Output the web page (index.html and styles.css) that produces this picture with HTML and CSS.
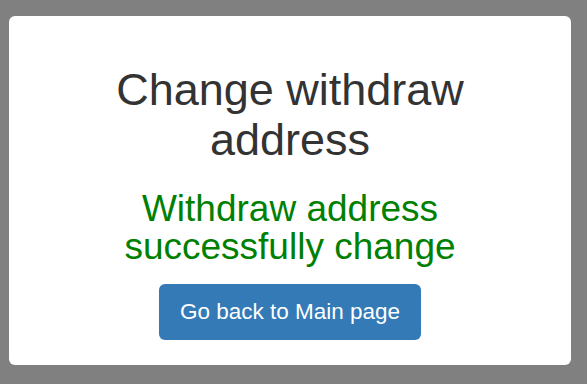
FILE: index.html
```html
<!DOCTYPE html>
<html lang="en">
<head>
    <meta charset="UTF-8">
    <meta name="viewport" content="width=device-width, initial-scale=1.0">
    <title>Change withdraw address</title>
    <link rel="stylesheet" href="styles.css">
</head>
<body>
    <div class="modal-box">
        <h1 class="title">Change withdraw address</h1>
        <div class="message">Withdraw address successfully change</div>
        <a class="back-button" href="#">Go back to Main page</a>
    </div>
</body>
</html>
```

FILE: styles.css
```css
body {
    margin: 0;
    padding: 16px 16px 0 9px;
    background-color: #808080;
    font-family: 'Liberation Sans', Arial, sans-serif;
}
.modal-box {
    width: 562px;
    box-sizing: border-box;
    padding: 49px 90px 25px;
    background-color: #fff;
    border-radius: 6px;
    text-align: center;
}
.title {
    margin: 0;
    font-size: 45px;
    line-height: 50px;
    font-weight: normal;
    color: #333;
}
.message {
    margin-top: 25px;
    font-size: 37px;
    line-height: 38px;
    color: #008000;
}
.back-button {
    display: inline-block;
    margin-top: 18px;
    padding: 14px 21px;
    font-size: 22.5px;
    line-height: 28px;
    color: #fff;
    background-color: #337ab7;
    border-radius: 6px;
    text-decoration: none;
}
```
